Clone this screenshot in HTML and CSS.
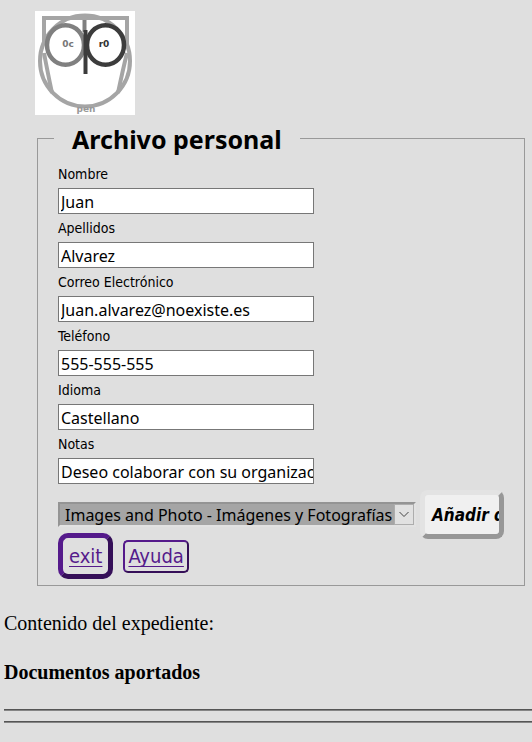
FILE: index.html
```html
<!DOCTYPE html>
<html lang="es">
<head>
<meta charset="utf-8">
<title>Archivo personal</title>
<link rel="stylesheet" href="styles.css">
</head>
<body>
<header class="brand">
  <svg class="logo" viewBox="0 0 100 104" role="img" aria-label="Ocr0 pen">
    <rect width="100" height="104" fill="#fff"/>
    <g fill="none" stroke="#a5a5a5" stroke-width="4">
      <path d="M9 34V7H92V34"/>
      <ellipse cx="50" cy="50" rx="45" ry="45.500"/>
      <path d="M9 42Q12 58 17 82M92 42Q88 58 83 82"/>
    </g>
    <ellipse cx="30.500" cy="34" rx="18.500" ry="19.800" fill="#fff" stroke="#808080" stroke-width="4.500"/>
    <ellipse cx="70.500" cy="34" rx="18.500" ry="19.800" fill="#fff" stroke="#3c3c3c" stroke-width="4.500"/>
    <path d="M49.500 9V21" stroke="#808080" stroke-width="4"/>
    <path d="M50.500 19V63" stroke="#3c3c3c" stroke-width="4"/>
    <text class="logo-left" x="33" y="36">0c</text>
    <text class="logo-right" x="69" y="36">r0</text>
    <text class="logo-pen" x="51" y="101">pen</text>
  </svg>
</header>
<form class="profile">
  <fieldset class="panel">
    <legend>Archivo personal</legend>
    <div class="fields">
      <label for="nombre">Nombre</label>
      <input id="nombre" type="text" value="Juan">
      <label for="apellidos">Apellidos</label>
      <input id="apellidos" type="text" value="Alvarez">
      <label for="correo">Correo Electrónico</label>
      <input id="correo" type="text" value="Juan.alvarez@noexiste.es">
      <label for="telefono">Teléfono</label>
      <input id="telefono" type="text" value="555-555-555">
      <label for="idioma">Idioma</label>
      <input id="idioma" type="text" value="Castellano">
      <label for="notas">Notas</label>
      <input id="notas" type="text" value="Deseo colaborar con su organización">
    </div>
    <div class="upload">
      <div class="picker">
        <select aria-label="Tipo de documento">
          <option>Images and Photo - Imágenes y Fotografías</option>
        </select>
        <svg class="chevron" viewBox="0 0 20 21" aria-hidden="true">
          <rect x="0.500" y="0.500" width="19" height="20" fill="#e1e1e1" stroke="#adadad"/>
          <path d="M5.500 8L10 12.500L14.500 8" fill="none" stroke="#444"/>
        </svg>
      </div>
      <button class="add" type="button">Añadir documento</button>
    </div>
    <nav class="links">
      <a class="exit" href="#">exit</a>
      <a class="help" href="#">Ayuda</a>
    </nav>
  </fieldset>
</form>
<main class="record">
  <p>Contenido del expediente:</p>
  <h4>Documentos aportados</h4>
  <hr>
  <hr>
</main>
</body>
</html>
```
FILE: styles.css
```css
* {
  box-sizing: border-box;
}

body {
  margin: 0;
  background: #dfdfdf;
  color: #000;
  font-family: "DejaVu Sans Condensed", Tahoma, sans-serif;
  overflow-x: hidden;
}

.brand {
  padding: 11px 35px 0;
}

.logo {
  display: block;
  width: 100px;
}

.logo text {
  font-family: "DejaVu Sans", sans-serif;
  font-weight: bold;
  font-size: 9px;
  text-anchor: middle;
}

.logo .logo-left {
  fill: #777;
}

.logo .logo-right {
  fill: #333;
}

.logo .logo-pen {
  fill: #999;
}

.profile {
  padding: 7px 7px 0 37px;
}

.panel {
  margin: 0;
  min-width: 0;
  padding: 6px 20px 6px;
  border: 1px solid #999;
}

legend {
  margin-left: -4px;
  padding: 2px 18px 0;
  font-family: "Noto Sans", Tahoma, sans-serif;
  font-size: 25px;
  font-weight: bold;
  line-height: 30px;
}

.fields {
  display: flex;
  flex-direction: column;
  align-items: flex-start;
}

label {
  font-size: 14px;
  line-height: 28px;
}

.fields input {
  width: 256px;
  height: 26px;
  padding: 3px 0 1px 2px;
  border: 1px solid #777;
  background: #fff;
  color: #000;
  font-family: "Noto Sans", Tahoma, sans-serif;
  font-size: 16px;
}

.upload {
  display: flex;
  align-items: center;
  gap: 4px;
  margin-top: 6px;
}

.picker {
  position: relative;
  width: 358px;
}

select {
  display: block;
  appearance: none;
  width: 100%;
  height: 25px;
  padding: 0 22px 0 5px;
  border: 2px solid;
  border-color: #949494 #e2e2e2 #e2e2e2 #949494;
  border-radius: 0;
  background: #a5a5a5;
  color: #000;
  font-family: "Noto Sans", Tahoma, sans-serif;
  font-size: 16px;
}

.chevron {
  position: absolute;
  top: 2px;
  right: 2px;
  width: 20px;
  height: 21px;
  pointer-events: none;
}

.add {
  width: 84px;
  height: 49px;
  padding: 0 0 0 7px;
  border: 5px solid;
  border-color: #e3e3e3 #979797 #979797 #e3e3e3;
  border-radius: 8px;
  background: #f0f0f0;
  color: #000;
  font-family: inherit;
  font-size: 17px;
  font-style: italic;
  font-weight: bold;
  text-align: left;
  white-space: nowrap;
  overflow: hidden;
}

.links {
  display: flex;
  align-items: center;
  gap: 10px;
  margin-top: -6px;
}

.links a {
  color: #551a8b;
  font-size: 20px;
  line-height: 29px;
  border-style: solid;
  border-color: #551a8b #350f58 #350f58 #551a8b;
  text-decoration-thickness: 1px;
  text-decoration-skip-ink: none;
  text-underline-offset: 3px;
}

.exit {
  padding: 4px 6px 3px;
  border-width: 5px;
  border-radius: 10px;
}

.help {
  padding: 0 3px;
  border-width: 2px;
  border-radius: 5px;
}

.record {
  padding-left: 4px;
  font-family: "Liberation Serif", "Times New Roman", serif;
  font-size: 20px;
  line-height: 22px;
}

.record p {
  margin: 26px 0 27px;
}

.record h4 {
  margin: 0 0 26px;
}

.record hr {
  height: 2px;
  margin: 0 0 10px;
  border: 0;
  border-top: 1px solid #555;
  background: #858585;
}
```
